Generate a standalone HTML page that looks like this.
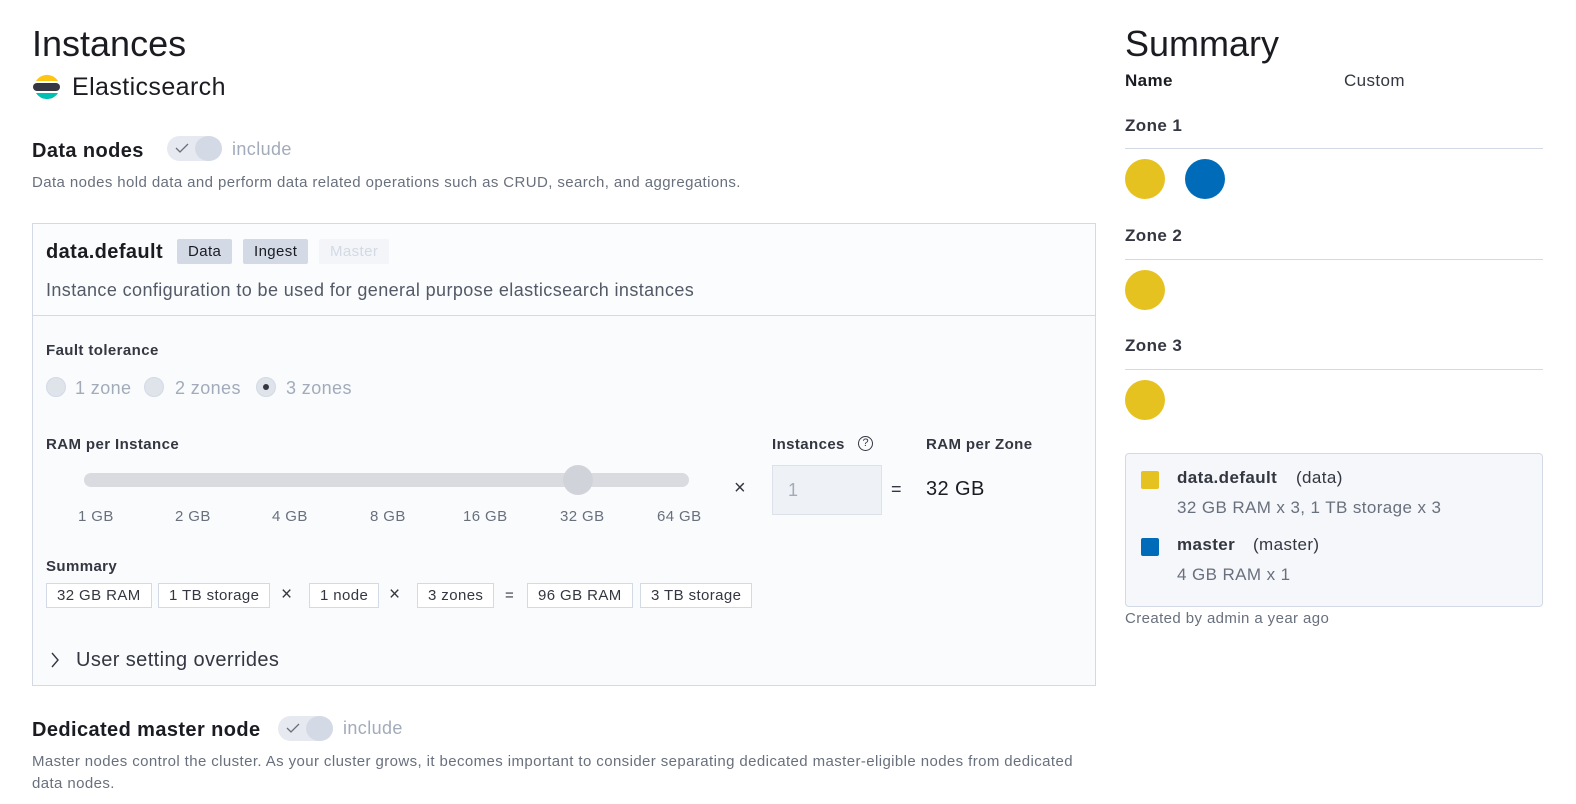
<!DOCTYPE html>
<html><head><style>
*{margin:0;padding:0;box-sizing:border-box}
body{width:1576px;height:804px;background:#fff;font-family:"Liberation Sans",sans-serif;color:#1a1c21;position:relative;overflow:hidden;letter-spacing:0.025em}
.a{position:absolute;white-space:nowrap}
.sub{color:#69707d}
.tag{position:absolute;height:25px;background:#d3dae6;border-radius:2px;font-size:15px;line-height:25px;padding:0 11px;color:#1a1c21}
.box{position:absolute;height:25px;border:1px solid #d3dae6;background:#fff;font-size:15px;line-height:23px;padding:0 10px;color:#343741}
.radio{position:absolute;width:20px;height:20px;border-radius:50%;background:#dfe3ea;border:1px solid #d3dae6}
.tog{position:absolute;width:55px;height:25px;border-radius:13px;background:#e6e9ef}
.tog i{position:absolute;right:0;top:0;width:27px;height:25px;border-radius:50%;background:#d3dae6}
.dot{position:absolute;width:40px;height:40px;border-radius:50%;background:#e6c220}
.hr{position:absolute;left:1125px;width:418px;height:1px;background:#d3dae6}
</style></head><body>
<div class="a" style="left:32px;top:23px;font-size:36px;font-weight:300;color:#1a1c21;letter-spacing:0">Instances</div>
<svg class="a" style="left:33px;top:72px" width="28" height="30" viewBox="0 0 28 30">
<path d="M3 9 A13 13 0 0 1 25 9 Z" fill="#fec514"/>
<rect x="0" y="11" width="27" height="8" rx="4" fill="#343741"/>
<path d="M3 21 A13 13 0 0 0 25 21 Z" fill="#00bfb3"/>
</svg>
<div class="a" style="left:72px;top:73px;font-size:25px">Elasticsearch</div>

<div class="a" style="left:32px;top:140px;font-size:20px;font-weight:bold;color:#1a1c21">Data nodes</div>
<div class="tog" style="left:167px;top:136px"><i></i><svg class="a" style="left:8px;top:7px" width="14" height="10"><path d="M1 5 L5 9 L13 1" stroke="#69707d" fill="none" stroke-width="1.3"/></svg></div>
<div class="a" style="left:232px;top:139px;font-size:18px;color:#a2abba">include</div>
<div class="a sub" style="left:32px;top:174px;font-size:15px">Data nodes hold data and perform data related operations such as CRUD, search, and aggregations.</div>

<div class="a" style="left:32px;top:223px;width:1064px;height:463px;border:1px solid #d3dae6;background:#fafbfd"></div>
<div class="a" style="left:33px;top:224px;width:1062px;height:92px;background:#fbfcfd;border-bottom:1px solid #d3dae6"></div>
<div class="a" style="left:46px;top:241px;font-size:20px;font-weight:bold">data.default</div>
<div class="tag" style="left:177px;top:239px">Data</div>
<div class="tag" style="left:243px;top:239px">Ingest</div>
<div class="tag" style="left:319px;top:239px;background:#f3f5f8;color:#d3dae6">Master</div>
<div class="a sub" style="left:46px;top:280px;font-size:18px;color:#535966">Instance configuration to be used for general purpose elasticsearch instances</div>

<div class="a" style="left:46px;top:342px;font-size:15px;font-weight:bold;color:#343741">Fault tolerance</div>
<div class="radio" style="left:46px;top:377px"></div><div class="a" style="left:75px;top:378px;font-size:18px;color:#a2abba">1 zone</div>
<div class="radio" style="left:144px;top:377px"></div><div class="a" style="left:175px;top:378px;font-size:18px;color:#a2abba">2 zones</div>
<div class="radio" style="left:256px;top:377px"><i style="position:absolute;left:6px;top:6px;width:6px;height:6px;border-radius:50%;background:#343741"></i></div><div class="a" style="left:286px;top:378px;font-size:18px;color:#a2abba">3 zones</div>

<div class="a" style="left:46px;top:436px;font-size:15px;font-weight:bold;color:#343741">RAM per Instance</div>
<div class="a" style="left:84px;top:473px;width:605px;height:14px;border-radius:7px;background:#d9dbe0"></div>
<div class="a" style="left:563px;top:465px;width:30px;height:30px;border-radius:50%;background:#d0d3d9"></div>
<div class="a sub" style="left:78px;top:508px;font-size:15px">1 GB</div>
<div class="a sub" style="left:175px;top:508px;font-size:15px">2 GB</div>
<div class="a sub" style="left:272px;top:508px;font-size:15px">4 GB</div>
<div class="a sub" style="left:370px;top:508px;font-size:15px">8 GB</div>
<div class="a sub" style="left:463px;top:508px;font-size:15px">16 GB</div>
<div class="a sub" style="left:560px;top:508px;font-size:15px">32 GB</div>
<div class="a sub" style="left:657px;top:508px;font-size:15px">64 GB</div>
<div class="a" style="left:734px;top:477px;font-size:20px;color:#343741">×</div>
<div class="a" style="left:772px;top:436px;font-size:15px;font-weight:bold;color:#343741">Instances</div>
<div class="a" style="left:858px;top:436px;width:15px;height:15px;border:1.3px solid #343741;border-radius:50%;font-size:11px;line-height:13px;text-align:center;color:#343741;letter-spacing:0">?</div>
<div class="a" style="left:772px;top:465px;width:110px;height:50px;background:#eef1f5;border:1px solid #dde2ea;font-size:18px;line-height:48px;padding-left:15px;color:#a2abba">1</div>
<div class="a" style="left:891px;top:479px;font-size:18px;color:#343741">=</div>
<div class="a" style="left:926px;top:436px;font-size:15px;font-weight:bold;color:#343741">RAM per Zone</div>
<div class="a" style="left:926px;top:478px;font-size:20px">32 GB</div>

<div class="a" style="left:46px;top:558px;font-size:15px;font-weight:bold;color:#343741">Summary</div>
<div class="box" style="left:46px;top:583px">32 GB RAM</div>
<div class="box" style="left:158px;top:583px">1 TB storage</div>
<div class="a" style="left:281px;top:584px;font-size:19px;color:#343741">×</div>
<div class="box" style="left:309px;top:583px">1 node</div>
<div class="a" style="left:389px;top:584px;font-size:19px;color:#343741">×</div>
<div class="box" style="left:417px;top:583px">3 zones</div>
<div class="a" style="left:505px;top:587px;font-size:15px;color:#343741">=</div>
<div class="box" style="left:527px;top:583px">96 GB RAM</div>
<div class="box" style="left:640px;top:583px">3 TB storage</div>
<svg class="a" style="left:50px;top:652px" width="10" height="16"><path d="M2 1 L8 8 L2 15" stroke="#343741" fill="none" stroke-width="1.4"/></svg>
<div class="a" style="left:76px;top:649px;font-size:20px;color:#343741">User setting overrides</div>

<div class="a" style="left:32px;top:719px;font-size:20px;font-weight:bold">Dedicated master node</div>
<div class="tog" style="left:278px;top:716px"><i></i><svg class="a" style="left:8px;top:7px" width="14" height="10"><path d="M1 5 L5 9 L13 1" stroke="#69707d" fill="none" stroke-width="1.3"/></svg></div>
<div class="a" style="left:343px;top:718px;font-size:18px;color:#a2abba">include</div>
<div class="a sub" style="left:32px;top:751px;font-size:15px;line-height:22px;white-space:normal;width:1060px">Master nodes control the cluster. As your cluster grows, it becomes important to consider separating dedicated master-eligible nodes from dedicated data nodes.</div>

<div class="a" style="left:1125px;top:23px;font-size:36px;font-weight:300;letter-spacing:0">Summary</div>
<div class="a" style="left:1125px;top:71px;font-size:17px;font-weight:bold">Name</div>
<div class="a" style="left:1344px;top:71px;font-size:17px;color:#343741">Custom</div>
<div class="a" style="left:1125px;top:116px;font-size:17px;font-weight:bold;color:#343741">Zone 1</div>
<div class="hr" style="top:148px"></div>
<div class="dot" style="left:1125px;top:159px"></div>
<div class="dot" style="left:1185px;top:159px;background:#006bb8"></div>
<div class="a" style="left:1125px;top:226px;font-size:17px;font-weight:bold;color:#343741">Zone 2</div>
<div class="hr" style="top:259px"></div>
<div class="dot" style="left:1125px;top:270px"></div>
<div class="a" style="left:1125px;top:336px;font-size:17px;font-weight:bold;color:#343741">Zone 3</div>
<div class="hr" style="top:369px"></div>
<div class="dot" style="left:1125px;top:380px"></div>

<div class="a" style="left:1125px;top:453px;width:418px;height:154px;background:#f5f7fa;border:1px solid #d3dae6;border-radius:4px"></div>
<div class="a" style="left:1141px;top:471px;width:18px;height:18px;border-radius:2px;background:#e6c220"></div>
<div class="a" style="left:1177px;top:468px;font-size:17px;font-weight:bold;color:#343741">data.default</div>
<div class="a" style="left:1296px;top:468px;font-size:17px;color:#343741">(data)</div>
<div class="a sub" style="left:1177px;top:498px;font-size:17px">32 GB RAM x 3, 1 TB storage x 3</div>
<div class="a" style="left:1141px;top:538px;width:18px;height:18px;border-radius:2px;background:#006bb8"></div>
<div class="a" style="left:1177px;top:535px;font-size:17px;font-weight:bold;color:#343741">master</div>
<div class="a" style="left:1253px;top:535px;font-size:17px;color:#343741">(master)</div>
<div class="a sub" style="left:1177px;top:565px;font-size:17px">4 GB RAM x 1</div>
<div class="a sub" style="left:1125px;top:610px;font-size:15px">Created by admin a year ago</div>
</body></html>
